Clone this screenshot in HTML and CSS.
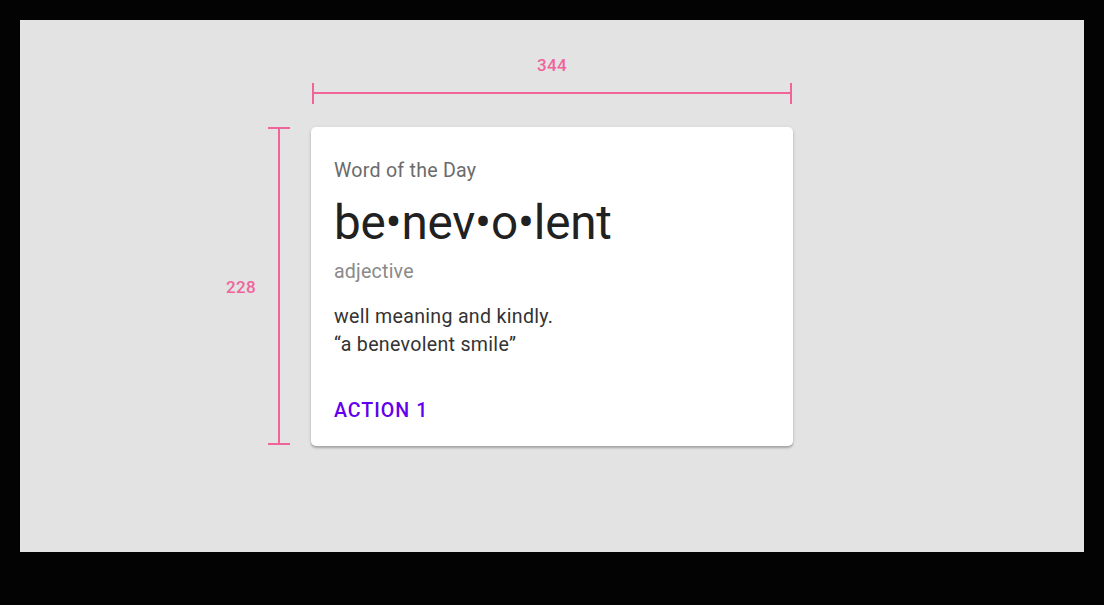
FILE: index.html
```html
<!DOCTYPE html>
<html lang="en">
<head>
    <meta charset="UTF-8">
    <meta name="viewport" content="width=device-width, initial-scale=1.0">
    <title>Card spec</title>
    <link rel="stylesheet" href="styles.css">
</head>
<body>
    <div class="panel">
        <div class="spec-width">
            <div class="spec-label">344</div>
            <div class="ruler-h"></div>
        </div>

        <div class="spec-height">
            <div class="spec-label">228</div>
            <div class="ruler-v"></div>
        </div>

        <div class="card">
            <div class="overline">Word of the Day</div>
            <div class="headline">be&bull;nev&bull;o&bull;lent</div>
            <div class="subhead">adjective</div>
            <p class="body">well meaning and kindly.<br>&ldquo;a benevolent smile&rdquo;</p>
            <div class="actions">
                <button class="text-button">Action 1</button>
            </div>
        </div>
    </div>
</body>
</html>
```

FILE: styles.css
```css
* {
    margin: 0;
    padding: 0;
    box-sizing: border-box;
}

body {
    background-color: #030303;
    font-family: Roboto, "Noto Sans", sans-serif;
    min-height: 100vh;
    padding: 20px;
}

.panel {
    width: 1064px;
    height: 532px;
    background: #e3e3e3;
    padding: 35px 0 0 206px;
    display: grid;
    grid-template-columns: 64px 482px;
    grid-template-rows: 49px auto;
    column-gap: 21px;
    row-gap: 23px;
    align-content: start;
}

/* dimension annotations */
.spec-label {
    color: #f0649a;
    font-size: 17px;
    font-weight: 500;
    line-height: 20px;
    letter-spacing: 0.3px;
}

.spec-width {
    grid-column: 2;
    grid-row: 1;
    display: flex;
    flex-direction: column;
    align-items: center;
    gap: 8px;
}

.ruler-h {
    height: 21px;
    position: relative;
    border-left: 2px solid #f0649a;
    border-right: 2px solid #f0649a;
    margin: 0 1px;
    align-self: stretch;
}

.ruler-h::before {
    content: "";
    position: absolute;
    left: 0;
    right: 0;
    top: 9px;
    height: 2px;
    background: #f0649a;
}

.spec-height {
    grid-column: 1;
    grid-row: 2;
    display: flex;
    align-items: center;
    justify-content: flex-end;
    gap: 12px;
}

.ruler-v {
    width: 22px;
    align-self: stretch;
    margin-bottom: 1px;
    position: relative;
    border-top: 2px solid #f0649a;
    border-bottom: 2px solid #f0649a;
}

.ruler-v::before {
    content: "";
    position: absolute;
    top: 0;
    bottom: 0;
    left: 10px;
    width: 2px;
    background: #f0649a;
}

/* the card itself */
.card {
    grid-column: 2;
    grid-row: 2;
    height: 319px;
    background: #fff;
    border-radius: 5px;
    box-shadow: 0 2px 2px rgba(0, 0, 0, 0.22), 0 1px 4px rgba(0, 0, 0, 0.1);
    padding: 30px 23px 0;
    display: flex;
    flex-direction: column;
}

.overline {
    font-size: 19.6px;
    line-height: 28px;
    color: #6b6b6b;
    letter-spacing: 0.25px;
}

.headline {
    margin-top: 10px;
    font-size: 47.6px;
    line-height: 56px;
    color: #212121;
    letter-spacing: -0.2px;
}

.subhead {
    margin-top: 7px;
    font-size: 19.6px;
    line-height: 28px;
    color: #8a8a8a;
    letter-spacing: 0.2px;
}

.body {
    margin-top: 17px;
    font-size: 19.6px;
    line-height: 28px;
    color: #333;
    letter-spacing: 0.3px;
}

.actions {
    margin-top: 38px;
}

.text-button {
    border: none;
    background: none;
    font-family: inherit;
    font-size: 19.6px;
    font-weight: 500;
    line-height: 28px;
    letter-spacing: 1px;
    text-transform: uppercase;
    color: #6200ee;
    cursor: pointer;
}
```
